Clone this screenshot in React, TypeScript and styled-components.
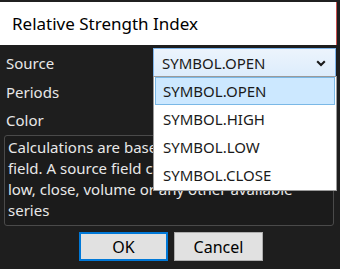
import React from 'react';
import styled, { createGlobalStyle } from 'styled-components';

const GlobalStyle = createGlobalStyle`
  html, body {
    margin: 0;
    padding: 0;
    background: #1e1e1e;
  }
  body {
    font-family: 'Noto Sans', 'Open Sans', sans-serif;
  }
`;

const sources = ['SYMBOL.OPEN', 'SYMBOL.HIGH', 'SYMBOL.LOW', 'SYMBOL.CLOSE'];

const descriptionLines = [
  'Calculations are based on the source',
  'field. A source field can be open, high,',
  'low, close, volume or any other available',
  'series',
];

const App = () => {
  return (
    <>
      <GlobalStyle />
      <WindowStyled>
        <TopStrip />
        <TitleBar>Relative Strength Index</TitleBar>
        <BodyStyled>
          <FormGrid>
            <Label>Source</Label>
            <ComboBox>
              <span>SYMBOL.OPEN</span>
              <svg width="10" height="7" viewBox="0 0 10 7">
                <path d="M1.2 1.3 L5 5 L8.8 1.3" fill="none" stroke="#1a1a1a" strokeWidth="2.1" />
              </svg>
            </ComboBox>
            <Label>Periods</Label>
            <span />
            <Label>Color</Label>
            <span />
          </FormGrid>
          <Description>
            {descriptionLines.map((line) => (
              <DescLine key={line}>{line}</DescLine>
            ))}
          </Description>
          <ButtonRow>
            <DialogButton $primary>OK</DialogButton>
            <DialogButton>Cancel</DialogButton>
          </ButtonRow>
          <DropList>
            {sources.map((s, i) => (
              <DropItem key={s} $selected={i === 0}>
                {s}
              </DropItem>
            ))}
          </DropList>
        </BodyStyled>
      </WindowStyled>
    </>
  );
};

export default App;

const WindowStyled = styled.div`
  position: relative;
  width: 340px;
  height: 269px;
  background: #1e1e1e;
  display: flex;
  flex-direction: column;
  overflow: hidden;
`;

const TopStrip = styled.div`
  height: 2px;
  background: #202020;
`;

const TitleBar = styled.div`
  width: 324px;
  height: 43px;
  padding-left: 12px;
  display: flex;
  align-items: center;
  background: #ffffff;
  border-right: 1px solid #c9504e;
  color: #000;
  font-size: 17px;
  font-family: 'Noto Sans', sans-serif;
`;

const BodyStyled = styled.div`
  position: relative;
  flex: 1;
  display: flex;
  flex-direction: column;
  padding: 3px 4px 0 4px;
  color: #e6e6e6;
`;

const FormGrid = styled.div`
  display: grid;
  grid-template-columns: 149px 183px;
  grid-template-rows: 30px 28px 28px;
  align-items: center;
`;

const Label = styled.div`
  padding-left: 2px;
  font-size: 15px;
  color: #e8e8e8;
`;

const ComboBox = styled.div`
  box-sizing: border-box;
  height: 30px;
  display: flex;
  align-items: center;
  justify-content: space-between;
  padding: 0 9px 0 8px;
  background: linear-gradient(#ecf4fc, #dcecfc);
  border: 1px solid #7eb4ea;
  color: #1a1a1a;
  font-size: 15px;
`;

const Description = styled.div`
  box-sizing: border-box;
  margin-top: 1px;
  width: 330px;
  height: 91px;
  padding: 1px 4px 0 3px;
  background: #1b1b1b;
  border: 1px solid #4a4a4a;
  border-radius: 3px;
  font-size: 15px;
  line-height: 21px;
  color: #e8e8e8;
`;

const DescLine = styled.div`
  white-space: nowrap;
`;

const ButtonRow = styled.div`
  display: flex;
  justify-content: center;
  gap: 6px;
  margin-top: 6px;
  padding-left: 2px;
`;

const DialogButton = styled.button<{ $primary?: boolean }>`
  box-sizing: border-box;
  width: 89px;
  height: 29px;
  background: #e1e1e1;
  border: ${(p) => (p.$primary ? '2px solid #0078d7' : '1px solid #adadad')};
  color: #000;
  font-family: 'Noto Sans', sans-serif;
  font-size: 16px;
  padding: 0;
`;

const DropList = styled.div`
  position: absolute;
  top: 31px;
  left: 153px;
  box-sizing: border-box;
  width: 184px;
  height: 115px;
  padding: 0 1px;
  background: #ffffff;
  border: 1px solid #9a9a9a;
  display: flex;
  flex-direction: column;
`;

const DropItem = styled.div<{ $selected?: boolean }>`
  box-sizing: border-box;
  height: 28px;
  display: flex;
  align-items: center;
  padding-left: 7px;
  color: #1a1a1a;
  font-size: 15px;
  background: ${(p) => (p.$selected ? '#cce8ff' : 'transparent')};
  border: 1px solid ${(p) => (p.$selected ? '#7ab8e6' : 'transparent')};
`;
